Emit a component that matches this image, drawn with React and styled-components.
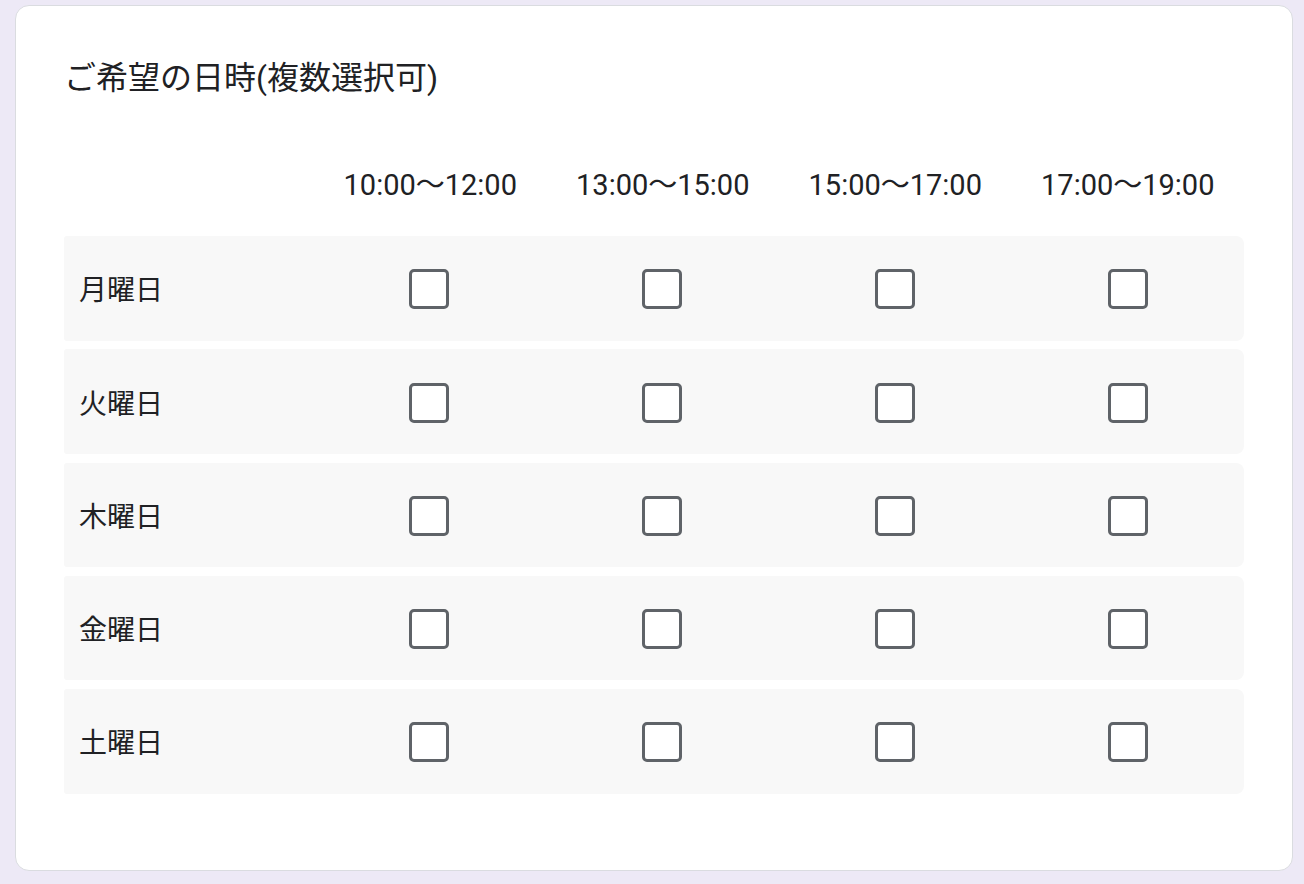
import React, { useState } from 'react'
import styled, { createGlobalStyle } from 'styled-components'

const GlobalStyle = createGlobalStyle`
  html, body {
    margin: 0;
    padding: 0;
    background: #ede9f6;
  }
  body {
    font-family: Roboto, "Noto Sans CJK JP", sans-serif;
    color: #202124;
  }
`

const slots = ['10:00〜12:00', '13:00〜15:00', '15:00〜17:00', '17:00〜19:00']
const days = ['月曜日', '火曜日', '木曜日', '金曜日', '土曜日']

function App() {
  const [checked, setChecked] = useState({})

  const toggle = (key) => {
    setChecked((prev) => ({ ...prev, [key]: !prev[key] }))
  }

  return (
    <Page>
      <GlobalStyle />
      <Card>
        <Title>ご希望の日時(複数選択可)</Title>
        <Grid>
          <HeaderRow>
            <LabelCell />
            {slots.map((s) => (
              <HeaderCell key={s}>{s}</HeaderCell>
            ))}
          </HeaderRow>
          {days.map((d) => (
            <Row key={d}>
              <DayCell>{d}</DayCell>
              {slots.map((s) => {
                const key = d + s
                return (
                  <BoxCell key={s}>
                    <Checkbox
                      role="checkbox"
                      aria-checked={!!checked[key]}
                      $on={!!checked[key]}
                      onClick={() => toggle(key)}
                    />
                  </BoxCell>
                )
              })}
            </Row>
          ))}
        </Grid>
      </Card>
    </Page>
  )
}

export default App

const Page = styled.div`
  padding: 5px 11px 0 15px;
  min-height: 879px;
`

const Card = styled.div`
  box-sizing: border-box;
  width: 1278px;
  height: 866px;
  background: #fff;
  border: 1px solid #dadce0;
  border-radius: 14px;
  padding: 51px 48px 0 48px;
`

const Title = styled.div`
  font-size: 32px;
  line-height: 42px;
  color: #202124;
`

const Grid = styled.div`
  margin-top: 58px;
  display: flex;
  flex-direction: column;
  gap: 8.75px;
`

const HeaderRow = styled.div`
  display: grid;
  grid-template-columns: 250px repeat(4, 1fr);
  height: 56px;
  margin-bottom: 14.25px;
`

const LabelCell = styled.div``

const HeaderCell = styled.div`
  display: flex;
  align-items: center;
  justify-content: center;
  font-size: 29px;
  line-height: 56px;
  color: #202124;
  white-space: nowrap;
`

const Row = styled.div`
  display: grid;
  grid-template-columns: 249px repeat(4, 1fr);
  height: 104.5px;
  background: #f8f8f8;
  border-radius: 3px 8px 8px 3px;
`

const DayCell = styled.div`
  display: flex;
  align-items: center;
  padding: 0 0 0 15px;
  font-size: 28px;
  color: #202124;
`

const BoxCell = styled.div`
  display: flex;
  align-items: center;
  justify-content: center;
  padding: 2px 0 0 0;
`

const Checkbox = styled.div`
  box-sizing: border-box;
  width: 40px;
  height: 40px;
  border: 3.5px solid ${(p) => (p.$on ? '#673ab7' : '#5f6368')};
  background: ${(p) => (p.$on ? '#673ab7' : '#fff')};
  border-radius: 5px;
  cursor: pointer;
`
